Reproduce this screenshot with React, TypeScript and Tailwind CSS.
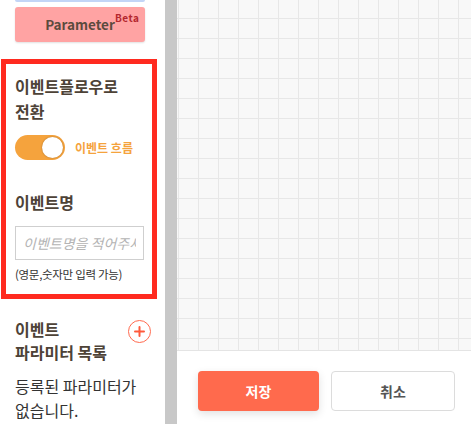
export default function App() {
  return (
    <div className="flex h-[424px] w-[471px] overflow-hidden bg-white font-['Noto_Sans_CJK_KR','Noto_Sans',sans-serif]">
      <aside className="flex w-[165px] shrink-0 flex-col bg-white">
        <div className="ml-[15px] h-[2px] w-[130px] rounded-b-[2px] bg-[#c3d5f6]" />

        <div className="ml-[15px] mt-[5px] relative flex h-[35px] w-[130px] items-center justify-center rounded-[3px] bg-[#ffa3a3] shadow-[0_1px_2px_rgba(0,0,0,0.12)]">
          <span className="text-[13.5px] font-bold text-[#5b4b3e]">Parameter</span>
          <span className="absolute left-[100px] top-[3px] text-[10px] font-semibold tracking-[0.5px] text-[#b4282e]">Beta</span>
        </div>

        <section className="ml-[1px] mt-[17px] w-[156px] border-[5px] border-[#ff2a1f] px-[9px] pb-[11px] pt-[10px] break-keep">
          <h2 className="text-[16px] font-bold leading-[25px] text-[#4d4237]">이벤트플로우로 전환</h2>
          <div className="mt-[11px] flex items-center gap-[10px]">
            <div className="relative h-[25px] w-[50px] rounded-full bg-[#f5a33d]">
              <div className="absolute right-[2px] top-[2px] h-[21px] w-[21px] rounded-full bg-white shadow-[0_0_2px_rgba(0,0,0,0.3)]" />
            </div>
            <span className="text-[12px] font-bold text-[#f5a33d]">이벤트 흐름</span>
          </div>

          <h2 className="mt-[30px] text-[16px] font-bold leading-[25px] text-[#4d4237]">이벤트명</h2>
          <input
            className="mt-[11px] h-[34px] w-[129px] border border-[#cfcfcf] px-[7px] text-[14px] italic text-[#333] outline-none placeholder:text-[#b4b4b4]"
            placeholder="이벤트명을 적어주세요"
          />
          <p className="mt-[5px] whitespace-nowrap text-[11.5px] leading-[18px] tracking-[-0.3px] text-[#333]">(영문,숫자만 입력 가능)</p>
        </section>

        <div className="mt-[19px] flex items-start justify-between pl-[15px] pr-[14px]">
          <h3 className="text-[16px] font-bold leading-[23px] text-[#4d4237]">
            이벤트
            <br />
            파라미터 목록
          </h3>
          <button className="mt-[2px] flex h-[23px] w-[23px] items-center justify-center rounded-full border border-[#ff6a4f] bg-white">
            <svg width="11" height="11" viewBox="0 0 11 11">
              <path d="M5.5 1v9M1 5.5h9" stroke="#ff5a3c" strokeWidth="2" strokeLinecap="round" />
            </svg>
          </button>
        </div>
        <p className="mt-[10px] pl-[15px] text-[16px] leading-[24px] text-[#333]">
          등록된 파라미터가
          <br />
          없습니다.
        </p>
      </aside>

      <div className="w-[12px] shrink-0 bg-[#c8c8c8]" />

      <main className="flex flex-1 flex-col">
        <div className="h-[351px] border-b border-[#e4e4e4] bg-[#f8f8f8] bg-[linear-gradient(to_right,#e7e7e7_1px,transparent_1px),linear-gradient(to_bottom,#e7e7e7_1px,transparent_1px)] bg-[size:20px_20px] bg-[position:1px_18px]" />
        <div className="flex flex-1 gap-[12px] bg-white pl-[21px] pt-[20px]">
          <button className="h-[40px] w-[121px] rounded-[4px] bg-[#ff6a4d] text-[14px] font-bold text-white shadow-[0_3px_8px_rgba(0,0,0,0.12)]">
            저장
          </button>
          <button className="h-[40px] w-[124px] rounded-[4px] border border-[#dcdcdc] bg-white text-[14px] font-bold text-[#555]">
            취소
          </button>
        </div>
      </main>
    </div>
  );
}
